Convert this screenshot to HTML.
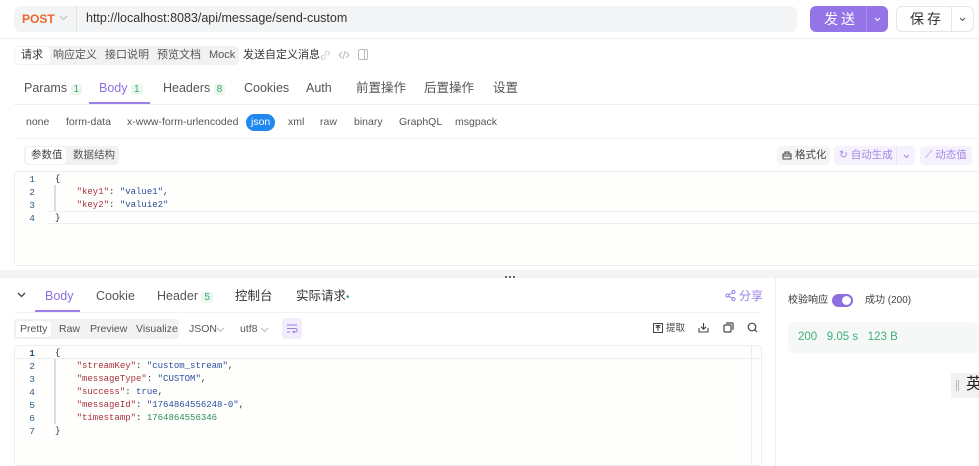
<!DOCTYPE html>
<html><head><meta charset="utf-8"><style>
*{margin:0;padding:0;box-sizing:border-box}
body{width:979px;height:466px;overflow:hidden;background:#fff;font-family:"Liberation Sans","Noto Sans CJK SC",sans-serif;color:#333;position:relative;font-size:12px}
.a{position:absolute;white-space:nowrap;line-height:1}
.mono{font-family:"Liberation Mono","DejaVu Sans Mono",monospace;font-size:9px}
.k{color:#a8323c}.s{color:#2c4f9e}.n{color:#2e8b57}.ln{color:#2c5f8a;text-align:right;width:10px;font-size:9.5px}
.g{color:#555}
.badge{color:#3aa86b;font-size:10px;background:#eaf7ef;padding:0 3px;border-radius:3px}
svg{display:block}
</style></head><body>
<!-- url bar -->
<div class="a" style="left:14px;top:6px;width:783px;height:26px;background:#f3f4f5;border-radius:7px"></div>
<div class="a" style="left:22px;top:13px;font-weight:bold;color:#e8692a;font-size:12px">POST</div>
<svg class="a" style="left:59px;top:15px" width="9" height="6"><path d="M1 1 L4.5 4.5 L8 1" stroke="#bbb" fill="none"/></svg>
<div class="a" style="left:76px;top:6px;width:1px;height:26px;background:#e2e2e2"></div>
<div class="a" style="left:86px;top:12px;font-size:12.5px;color:#333">http://localhost:8083/api/message/send-custom</div>
<div class="a" style="left:810px;top:6px;width:78px;height:26px;background:#9474e6;border-radius:6px"></div>
<div class="a" style="left:866px;top:6px;width:1px;height:26px;background:#a98ded"></div>
<div class="a" style="left:824px;top:12px;color:#fff;font-size:14px;letter-spacing:3px">发送</div>
<svg class="a" style="left:874px;top:17px" width="7" height="5"><path d="M1 1 L3.5 3.5 L6 1" stroke="#fff" fill="none"/></svg>
<div class="a" style="left:896px;top:6px;width:78px;height:26px;border:1px solid #e6e6e6;border-radius:6px"></div>
<div class="a" style="left:951px;top:7px;width:1px;height:24px;background:#e6e6e6"></div>
<div class="a" style="left:910px;top:12px;color:#333;font-size:14px;letter-spacing:3px">保存</div>
<svg class="a" style="left:959px;top:17px" width="7" height="5"><path d="M1 1 L3.5 3.5 L6 1" stroke="#555" fill="none"/></svg>
<div class="a" style="left:0;top:38px;width:979px;height:1px;background:#eee"></div>
<!-- sub tabs -->
<div class="a" style="left:14px;top:46px;width:225px;height:19px;background:#f2f2f2;border-radius:4px"></div>
<div class="a" style="left:15px;top:47px;width:35px;height:17px;background:#fff;border-radius:4px"></div>
<div class="a" style="left:21px;top:50px;font-size:11px;color:#333">请求</div>
<div class="a g" style="left:53px;top:50px;font-size:11px">响应定义</div>
<div class="a g" style="left:105px;top:50px;font-size:11px">接口说明</div>
<div class="a g" style="left:157px;top:50px;font-size:11px">预览文档</div>
<div class="a g" style="left:209px;top:50px;font-size:11px">Mock</div>
<div class="a" style="left:243px;top:50px;font-size:11px;color:#333">发送自定义消息</div>
<svg class="a" style="left:319px;top:49px" width="12" height="12"><path d="M5 7 L7 5 M4 6 L2.5 7.5 a1.8 1.8 0 0 0 2.5 2.5 L6.5 8.5 M6 4 L7.5 2.5 a1.8 1.8 0 0 1 2.5 2.5 L8.5 6.5" stroke="#ccc" fill="none"/></svg>
<svg class="a" style="left:338px;top:49px" width="12" height="12"><path d="M4 3 L1 6 L4 9 M8 3 L11 6 L8 9 M7 2 L5 10" stroke="#bbb" fill="none"/></svg>
<div class="a" style="left:358px;top:49px;width:10px;height:11px;border:1px solid #bbb;border-radius:2px"></div>
<div class="a" style="left:364px;top:49px;width:1px;height:11px;background:#bbb"></div>
<!-- tabs -->
<div class="a g" style="left:24px;top:82px;font-size:12.5px">Params <span class="badge">1</span></div>
<div class="a" style="left:99px;top:82px;font-size:12.5px;color:#8e6fe0">Body <span class="badge">1</span></div>
<div class="a g" style="left:163px;top:82px;font-size:12.5px">Headers <span class="badge">8</span></div>
<div class="a g" style="left:244px;top:82px;font-size:12.5px">Cookies</div>
<div class="a g" style="left:306px;top:82px;font-size:12.5px">Auth</div>
<div class="a g" style="left:356px;top:82px;font-size:12.5px">前置操作</div>
<div class="a g" style="left:424px;top:82px;font-size:12.5px">后置操作</div>
<div class="a g" style="left:493px;top:82px;font-size:12.5px">设置</div>
<div class="a" style="left:89px;top:102px;width:61px;height:2px;background:#9b7ee8"></div>
<div class="a" style="left:14px;top:104px;width:965px;height:1px;background:#f0f0f0"></div>
<!-- body types -->
<div class="a g" style="left:26px;top:117px;font-size:10.5px">none</div>
<div class="a g" style="left:66px;top:117px;font-size:10.5px">form-data</div>
<div class="a g" style="left:127px;top:117px;font-size:10.5px">x-www-form-urlencoded</div>
<div class="a" style="left:246px;top:114px;width:29px;height:17px;background:#1e88f0;border-radius:9px"></div>
<div class="a" style="left:251px;top:117px;font-size:10.5px;color:#fff">json</div>
<div class="a g" style="left:288px;top:117px;font-size:10.5px">xml</div>
<div class="a g" style="left:320px;top:117px;font-size:10.5px">raw</div>
<div class="a g" style="left:354px;top:117px;font-size:10.5px">binary</div>
<div class="a g" style="left:399px;top:117px;font-size:10.5px">GraphQL</div>
<div class="a g" style="left:455px;top:117px;font-size:10.5px">msgpack</div>
<div class="a" style="left:14px;top:138px;width:965px;height:1px;background:#f2f2f2"></div>
<!-- param toggle -->
<div class="a" style="left:24px;top:146px;width:95px;height:19px;background:#f2f2f2;border-radius:4px"></div>
<div class="a" style="left:26px;top:147px;width:40px;height:17px;background:#fff;border-radius:4px"></div>
<div class="a" style="left:31px;top:150px;font-size:10.5px;color:#444">参数值</div>
<div class="a g" style="left:73px;top:150px;font-size:10.5px">数据结构</div>
<div class="a" style="left:777px;top:146px;width:53px;height:19px;background:#f5f5f5;border-radius:4px"></div>
<svg class="a" style="left:782px;top:151px" width="10" height="9"><path d="M1 3 H9 V8 H1 Z M3 3 V1 H7 V3 M1 5 H9" stroke="#444" fill="none"/></svg>
<div class="a" style="left:795px;top:150px;font-size:10.5px;color:#444">格式化</div>
<div class="a" style="left:834px;top:146px;width:81px;height:19px;background:#f5f1fd;border-radius:4px"></div>
<div class="a" style="left:896px;top:146px;width:1px;height:19px;background:#ebe4fa"></div>
<div class="a" style="left:839px;top:150px;font-size:10.5px;color:#a58ae8">↻ 自动生成</div>
<svg class="a" style="left:903px;top:154px" width="7" height="5"><path d="M1 1 L3.5 3.5 L6 1" stroke="#a58ae8" fill="none"/></svg>
<div class="a" style="left:920px;top:146px;width:52px;height:19px;background:#f5f1fd;border-radius:4px"></div>
<div class="a" style="left:925px;top:150px;font-size:10.5px;color:#a58ae8">⟋ 动态值</div>
<!-- request editor -->
<div class="a" style="left:14px;top:171px;width:975px;height:95px;border:1px solid #eee;border-radius:4px;background:#fefefd"></div>
<div class="a" style="left:48px;top:211px;width:931px;height:13px;border-top:1px solid #eee;border-bottom:1px solid #eee"></div>
<div class="a" style="left:54px;top:185px;width:2px;height:26px;background:#ddd"></div>
<div class="a mono ln" style="left:25px;top:173px;line-height:13px">1<br>2<br>3<br>4</div>
<div class="a mono" style="left:55px;top:173px;line-height:13px;color:#333">{<br>&nbsp;&nbsp;&nbsp;&nbsp;<span class="k">"key1"</span>: <span class="s">"value1"</span>,<br>&nbsp;&nbsp;&nbsp;&nbsp;<span class="k">"key2"</span>: <span class="s">"valuie2"</span><br>}</div>
<div class="a" style="left:0;top:270px;width:979px;height:8px;background:#f4f4f5"></div>
<div class="a" style="left:505px;top:276px;width:2px;height:2px;background:#666"></div>
<div class="a" style="left:509px;top:276px;width:2px;height:2px;background:#666"></div>
<div class="a" style="left:513px;top:276px;width:2px;height:2px;background:#666"></div>
<!-- response tabs -->
<svg class="a" style="left:17px;top:292px" width="9" height="6"><path d="M1 1 L4.5 4.5 L8 1" stroke="#444" stroke-width="1.3" fill="none"/></svg>
<div class="a" style="left:45px;top:290px;font-size:12.5px;color:#8e6fe0">Body</div>
<div class="a g" style="left:96px;top:290px;font-size:12.5px">Cookie</div>
<div class="a g" style="left:157px;top:290px;font-size:12.5px">Header <span class="badge">5</span></div>
<div class="a" style="left:235px;top:290px;font-size:12.5px;color:#333">控制台</div>
<div class="a" style="left:296px;top:290px;font-size:12.5px;color:#333">实际请求<span style="color:#2fb36b;font-size:10px">•</span></div>
<div class="a" style="left:35px;top:310px;width:45px;height:2px;background:#9b7ee8"></div>
<div class="a" style="left:14px;top:312px;width:748px;height:1px;background:#f2f2f2"></div>
<svg class="a" style="left:725px;top:290px" width="11" height="11"><circle cx="8.5" cy="2" r="1.5" stroke="#9b7ee8" fill="none"/><circle cx="2.5" cy="5.5" r="1.5" stroke="#9b7ee8" fill="none"/><circle cx="8.5" cy="9" r="1.5" stroke="#9b7ee8" fill="none"/><path d="M4 4.7 L7 2.8 M4 6.3 L7 8.2" stroke="#9b7ee8"/></svg>
<div class="a" style="left:739px;top:290px;font-size:12px;color:#9b7ee8">分享</div>
<div class="a" style="left:775px;top:278px;width:1px;height:188px;background:#eee"></div>
<!-- response toolbar -->
<div class="a" style="left:14px;top:319px;width:165px;height:20px;background:#f2f2f2;border-radius:4px"></div>
<div class="a" style="left:15px;top:320px;width:37px;height:18px;background:#fff;border-radius:4px;border:1px solid #eee"></div>
<div class="a" style="left:20px;top:324px;font-size:10.5px;color:#555">Pretty</div>
<div class="a g" style="left:59px;top:324px;font-size:10.5px">Raw</div>
<div class="a g" style="left:90px;top:324px;font-size:10.5px">Preview</div>
<div class="a g" style="left:136px;top:324px;font-size:10.5px">Visualize</div>
<div class="a g" style="left:189px;top:324px;font-size:10.5px">JSON</div>
<svg class="a" style="left:216px;top:327px" width="9" height="6"><path d="M1 1 L4.5 4.5 L8 1" stroke="#bbb" fill="none"/></svg>
<div class="a g" style="left:240px;top:324px;font-size:10.5px">utf8</div>
<svg class="a" style="left:260px;top:327px" width="9" height="6"><path d="M1 1 L4.5 4.5 L8 1" stroke="#bbb" fill="none"/></svg>
<div class="a" style="left:282px;top:318px;width:20px;height:21px;background:#f2edfc;border-radius:4px"></div>
<svg class="a" style="left:286px;top:323px" width="12" height="11"><path d="M1 2 H11 M1 5.5 H9.5 a1.7 1.7 0 0 1 0 3.4 H7 M8 7.7 L6.8 9 L8 10.2 M1 9 H4" stroke="#9b7ee8" fill="none"/></svg>
<svg class="a" style="left:653px;top:323px" width="10" height="10"><rect x=".5" y=".5" width="9" height="9" stroke="#444" fill="none"/><path d="M2.5 2.5 H7.5 M5 3 V8 M3 5 L5 3 L7 5" stroke="#444" fill="none"/></svg>
<div class="a" style="left:666px;top:324px;font-size:9.5px;color:#444">提取</div>
<svg class="a" style="left:698px;top:322px" width="11" height="11"><path d="M5.5 1 V7 M3 4.8 L5.5 7.2 L8 4.8 M1 6 V10 H10 V6" stroke="#444" stroke-width="1.1" fill="none"/></svg>
<svg class="a" style="left:723px;top:322px" width="11" height="11"><rect x="1" y="3" width="7" height="7" rx="1" stroke="#444" stroke-width="1.2" fill="none"/><path d="M3 1 H9 a1 1 0 0 1 1 1 V8" stroke="#444" stroke-width="1.2" fill="none"/></svg>
<svg class="a" style="left:747px;top:322px" width="11" height="11"><circle cx="5" cy="5" r="3.8" stroke="#444" stroke-width="1.2" fill="none"/><path d="M7.8 7.8 L10 10" stroke="#444" stroke-width="1.2"/></svg>
<!-- response code -->
<div class="a" style="left:14px;top:345px;width:748px;height:121px;border:1px solid #eee;border-radius:4px;background:#fefefd"></div>
<div class="a" style="left:14px;top:346px;width:748px;height:13px;border-bottom:1px solid #eee"></div>
<div class="a" style="left:751px;top:346px;width:1px;height:120px;background:#eee"></div>
<div class="a" style="left:54px;top:359px;width:2px;height:65px;background:#ddd"></div>
<div class="a mono ln" style="left:25px;top:347px;line-height:13px"><b>1</b><br>2<br>3<br>4<br>5<br>6<br>7</div>
<div class="a mono" style="left:55px;top:347px;line-height:13px;color:#333">{<br>&nbsp;&nbsp;&nbsp;&nbsp;<span class="k">"streamKey"</span>: <span class="s">"custom_stream"</span>,<br>&nbsp;&nbsp;&nbsp;&nbsp;<span class="k">"messageType"</span>: <span class="s">"CUSTOM"</span>,<br>&nbsp;&nbsp;&nbsp;&nbsp;<span class="k">"success"</span>: <span class="s">true</span>,<br>&nbsp;&nbsp;&nbsp;&nbsp;<span class="k">"messageId"</span>: <span class="s">"1764864556248-0"</span>,<br>&nbsp;&nbsp;&nbsp;&nbsp;<span class="k">"timestamp"</span>: <span class="n">1764864556346</span><br>}</div>
<!-- right panel -->
<div class="a" style="left:788px;top:296px;font-size:10px;color:#333">校验响应</div>
<div class="a" style="left:832px;top:294px;width:21px;height:13px;background:#8e6fe0;border-radius:7px"></div>
<div class="a" style="left:842px;top:296px;width:9px;height:9px;background:#fff;border-radius:50%"></div>
<div class="a" style="left:865px;top:296px;font-size:10px;color:#444">成功 (200)</div>
<div class="a" style="left:788px;top:322px;width:191px;height:31px;background:#f6f8f8;border-radius:6px"></div>
<div class="a" style="left:798px;top:332px;font-size:11.5px;color:#3fae78">200 &nbsp; 9.05 s &nbsp; 123 B</div>
<div class="a" style="left:951px;top:373px;width:28px;height:25px;background:#f2f2f2"></div>
<div class="a" style="left:956px;top:380px;width:1px;height:11px;background:#bbb"></div>
<div class="a" style="left:958px;top:380px;width:1px;height:11px;background:#bbb"></div>
<div class="a" style="left:966px;top:377px;font-size:16px;color:#222">英</div>
</body></html>
